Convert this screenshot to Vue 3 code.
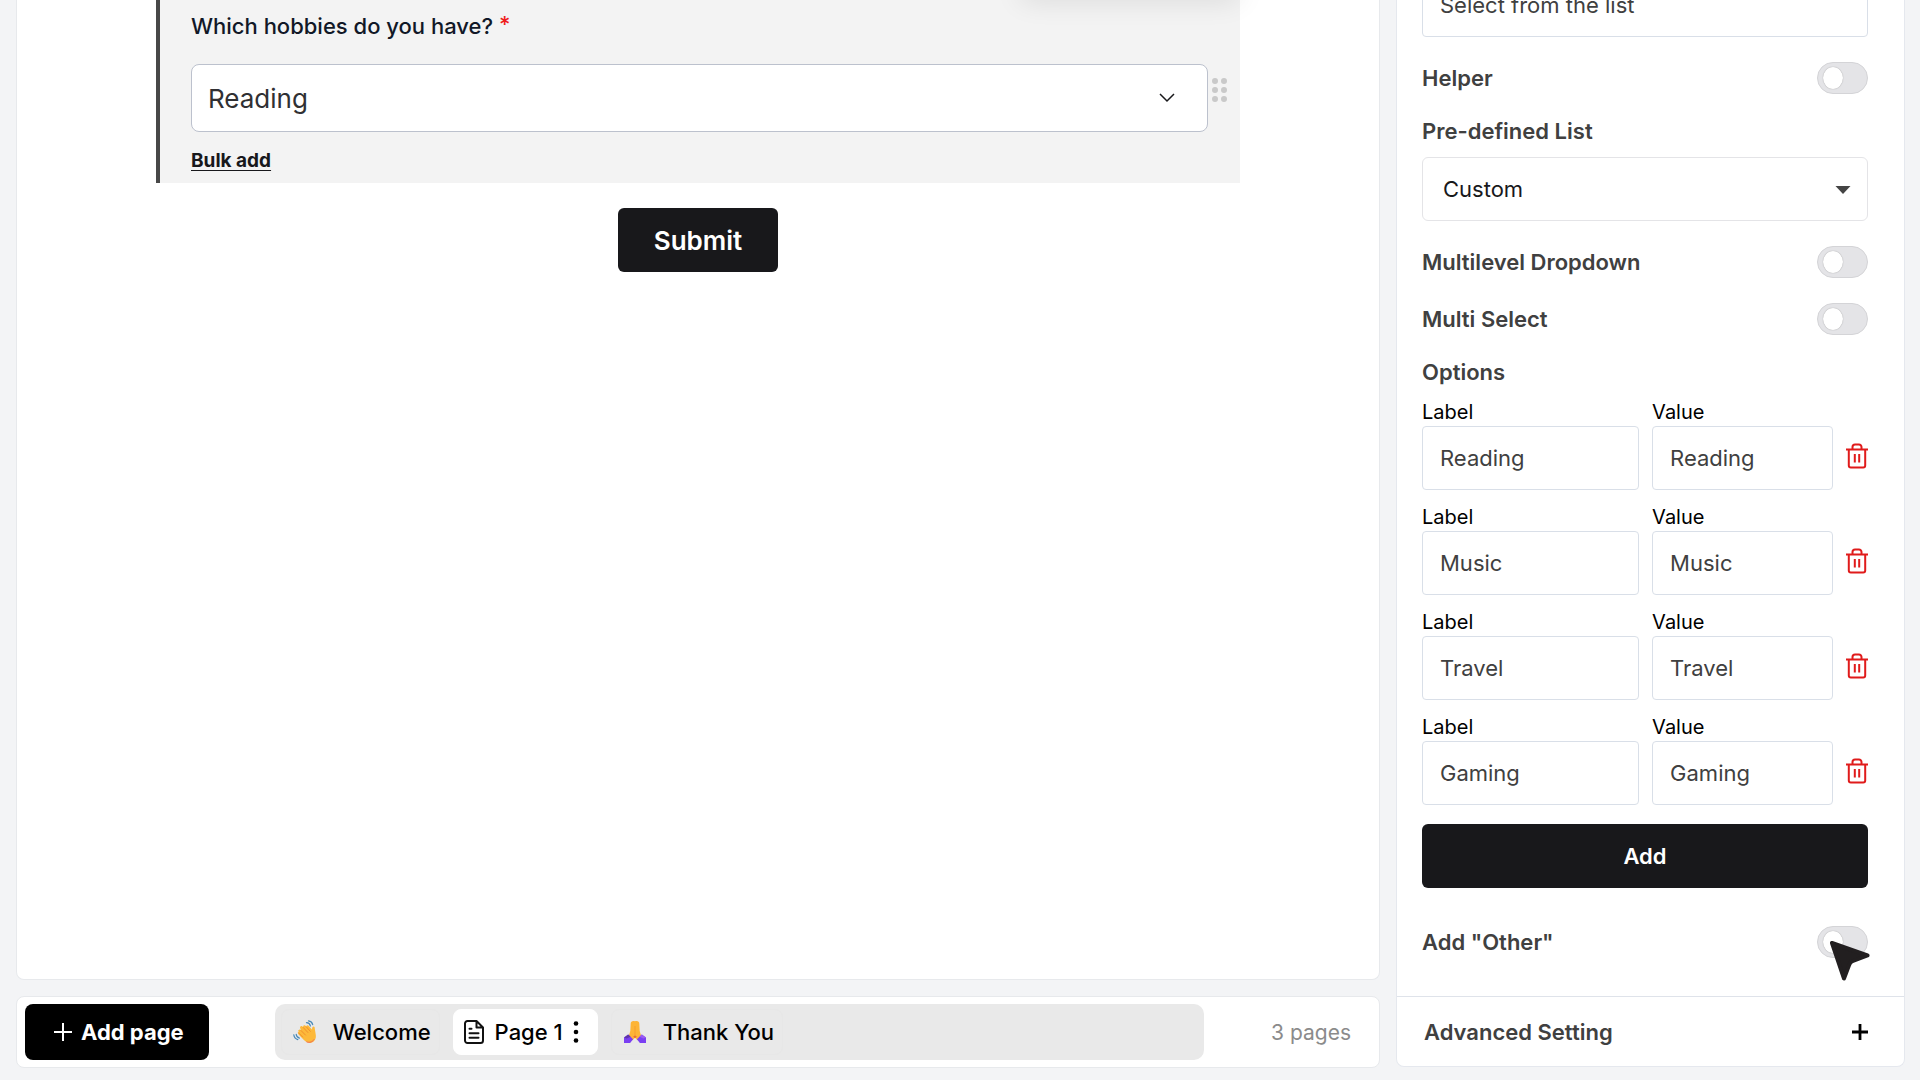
<script setup>
import { ref } from "vue"

const hobby = ref("Reading")
const placeholder = ref("Select from the list")
const listType = ref("Custom")
const helper = ref(false)
const multilevel = ref(false)
const multiSelect = ref(false)
const addOther = ref(false)
const currentPage = ref("page1")

let nextId = 5
const options = ref([
    { id: 1, label: "Reading", value: "Reading" },
    { id: 2, label: "Music", value: "Music" },
    { id: 3, label: "Travel", value: "Travel" },
    { id: 4, label: "Gaming", value: "Gaming" },
])

const addOption = () => {
    options.value.push({ id: nextId++, label: "", value: "" })
}

const removeOption = (id) => {
    options.value = options.value.filter((o) => o.id !== id)
}
</script>

<template>
    <div class="builder">
        <div class="workspace">
            <main class="canvas">
                <section class="question">
                    <div class="toolbar-shadow"></div>
                    <label class="question-title" for="hobby">
                        Which hobbies do you have?
                        <span class="required">*</span>
                    </label>
                    <div class="answer">
                        <select id="hobby" v-model="hobby">
                            <option v-for="o in options" :key="o.id">
                                {{ o.label }}
                            </option>
                        </select>
                        <svg
                            class="chevron"
                            width="16"
                            height="10"
                            viewBox="0 0 16 10"
                        >
                            <path
                                d="M1 1l7 7 7-7"
                                fill="none"
                                stroke="#18181b"
                                stroke-width="1.5"
                            />
                        </svg>
                        <svg
                            class="drag"
                            width="16"
                            height="24"
                            viewBox="0 0 16 24"
                            fill="#c9c9c9"
                        >
                            <circle cx="3" cy="3" r="3" />
                            <circle cx="12" cy="3" r="3" />
                            <circle cx="3" cy="12" r="3" />
                            <circle cx="12" cy="12" r="3" />
                            <circle cx="3" cy="21" r="3" />
                            <circle cx="12" cy="21" r="3" />
                        </svg>
                    </div>
                    <a class="bulk" href="#">Bulk add</a>
                </section>
                <button class="btn submit" type="button">Submit</button>
            </main>

            <footer class="pages">
                <button class="add-page" type="button">
                    <svg width="18" height="18" viewBox="0 0 18 18">
                        <path d="M9 0v18M0 9h18" stroke="#fff" stroke-width="2" />
                    </svg>
                    Add page
                </button>
                <nav class="tabs">
                    <button
                        class="tab"
                        :class="{ active: currentPage === 'welcome' }"
                        type="button"
                        @click="currentPage = 'welcome'"
                    >
                        <svg width="24" height="24" viewBox="0 0 24 24">
                            <path
                                d="M5.5 10.2c1-1 2-.6 2.6 0l-1-2.3c-.3-1.6 1.6-2.4 2.6-1.2l.4.4c-.2-1.7 1.6-2.4 2.7-1.2l.5.5c.3-1.2 1.8-1.4 2.6-.4l3.2 3.8c-.2-1.5.3-3.1 1.5-3.2 1.1 0 1.2 1 1.2 2.2l1 6.2c.5 3.7-1.3 6.8-4.6 7.7-3 .8-5.4-.6-7.3-2.6l-5.3-5.7c-1-1.2-.8-2.6.3-2.9-.9-.5-.9-1.2-.4-1.3z"
                                fill="#fdb93a"
                            />
                            <path
                                d="M8 10.5l4.5 4.6M10.2 7.500l4.7 5M13.3 6.8l4 4.5M5.7 13l4 4"
                                fill="none"
                                stroke="#ef8a2b"
                                stroke-width=".9"
                                stroke-linecap="round"
                            />
                            <path
                                d="M13.5 21.8c2.4 1.2 6 .3 7.6-2.4"
                                fill="none"
                                stroke="#f0695a"
                                stroke-width="1"
                            />
                            <path
                                d="M13.5 2.7c2 .1 3.5 1.4 3.9 3.3M15.5.8c2.2.3 3.7 1.7 4.2 3.8M3.2 14.3c.1 2 1.2 3.3 3.2 3.8M.8 14.8c.3 2.5 1.7 4.2 4 4.8"
                                fill="none"
                                stroke="#4688b8"
                                stroke-width="1.2"
                                stroke-linecap="round"
                            />
                        </svg>
                        Welcome
                    </button>
                    <div
                        class="tab page-tab"
                        :class="{ active: currentPage === 'page1' }"
                    >
                        <button
                            class="page-name"
                            type="button"
                            @click="currentPage = 'page1'"
                        >
                            <svg
                                width="20"
                                height="24"
                                viewBox="0 0 20 24"
                                fill="none"
                                stroke="#111"
                                stroke-width="2"
                                stroke-linejoin="round"
                                stroke-linecap="round"
                            >
                                <path
                                    d="M12.5 1H3.500A2.5 2.5 0 0 0 1 3.500v17A2.500 2.500 0 0 0 3.500 23h13a2.500 2.500 0 0 0 2.500-2.500V7.500zM12.500 1v6.500H19M5.500 8.800h2M5.500 13.300h9M5.500 17.800h9"
                                />
                            </svg>
                            Page 1
                        </button>
                        <button
                            class="more"
                            type="button"
                            aria-label="Page menu"
                        >
                            <svg width="6" height="22" viewBox="0 0 6 22">
                                <circle cx="3" cy="2.5" r="2.3" />
                                <circle cx="3" cy="11" r="2.3" />
                                <circle cx="3" cy="19.5" r="2.3" />
                            </svg>
                        </button>
                    </div>
                    <button
                        class="tab"
                        :class="{ active: currentPage === 'thanks' }"
                        type="button"
                        @click="currentPage = 'thanks'"
                    >
                        <svg width="24" height="24" viewBox="0 0 24 24">
                            <path
                                d="M12 1.2c-2.6-.8-4.3.3-4.3 2.3L7.3 11 5.5 17l4.3 3.2 2.2-3 2.2 3 4.3-3.2-1.8-6-.4-7.5c0-2-1.7-3.1-4.3-2.3z"
                                fill="#fdb436"
                            />
                            <path
                                d="M12 6v11"
                                stroke="#f29a2e"
                                stroke-width=".8"
                            />
                            <path
                                d="M10.2 16.5l1.8-1 1.8 1-1.8 2z"
                                fill="#ec6b35"
                            />
                            <path
                                d="M5.2 14.5l4.9 4.8-3 3.7H1v-5.5z"
                                fill="#7a3ff2"
                            />
                            <path
                                d="M18.8 14.5l-4.9 4.8 3 3.7H23v-5.5z"
                                fill="#7a3ff2"
                            />
                            <path
                                d="M5.2 14.5l2.4 2.3-4 1.7L1 17.5z"
                                fill="#5f35a8"
                            />
                            <path
                                d="M18.8 14.5l-2.4 2.3 4 1.7L23 17.5z"
                                fill="#9a5cf0"
                            />
                        </svg>
                        Thank You
                    </button>
                </nav>
                <span class="count">3 pages</span>
            </footer>
        </div>

        <aside class="settings">
            <div class="fields">
                <input
                    v-model="placeholder"
                    class="input"
                    type="text"
                    aria-label="Placeholder"
                />

                <label class="row">
                    Helper
                    <input v-model="helper" class="toggle" type="checkbox" />
                </label>

                <label class="heading" for="list-type">Pre-defined List</label>
                <div class="list-type">
                    <select id="list-type" v-model="listType">
                        <option>Custom</option>
                    </select>
                    <svg
                        class="caret"
                        width="16"
                        height="8"
                        viewBox="0 0 16 8"
                    >
                        <path d="M.5 0h15L8 8z" fill="#444" />
                    </svg>
                </div>

                <label class="row">
                    Multilevel Dropdown
                    <input
                        v-model="multilevel"
                        class="toggle"
                        type="checkbox"
                    />
                </label>
                <label class="row">
                    Multi Select
                    <input
                        v-model="multiSelect"
                        class="toggle"
                        type="checkbox"
                    />
                </label>

                <h3 class="heading">Options</h3>
                <div class="options">
                    <div v-for="o in options" :key="o.id" class="option">
                        <label class="option-label">
                            Label
                            <input v-model="o.label" class="input" type="text" />
                        </label>
                        <label class="option-value">
                            Value
                            <input v-model="o.value" class="input" type="text" />
                        </label>
                        <button
                            class="remove"
                            type="button"
                            aria-label="Remove option"
                            @click="removeOption(o.id)"
                        >
                            <svg
                                width="22"
                                height="26"
                                viewBox="0 0 22 26"
                                fill="none"
                                stroke="#e01b1b"
                                stroke-width="2"
                                stroke-linejoin="round"
                            >
                                <path
                                    d="M0 6.5h22M2.8 6.5v16a2 2 0 0 0 2 2h12.4a2 2 0 0 0 2-2v-16M6.5 6V4a2.5 2.5 0 0 1 2.5-2.5h4A2.5 2.5 0 0 1 15.5 4v2M8.8 11v8.5M13.2 11v8.5"
                                />
                            </svg>
                        </button>
                    </div>
                </div>

                <button class="btn add" type="button" @click="addOption">
                    Add
                </button>

                <label class="row other">
                    Add "Other"
                    <input v-model="addOther" class="toggle" type="checkbox" />
                    <svg
                        class="pointer"
                        width="40"
                        height="40"
                        viewBox="0 0 40 40"
                    >
                        <path
                            d="M2 2l35.5 12.5L23 20q-3 1.2-3.8 3.8L14 37.5z"
                            fill="#221f20"
                            stroke="#221f20"
                            stroke-width="4"
                            stroke-linejoin="round"
                        />
                    </svg>
                </label>
            </div>
            <button class="advanced" type="button">
                Advanced Setting
                <svg width="16" height="16" viewBox="0 0 16 16">
                    <path d="M8 0v16M0 8h16" stroke="#000" stroke-width="2.8" />
                </svg>
            </button>
        </aside>
    </div>
</template>

<style>
body {
    margin: 0;
    background-color: #f3f4f6;
}
</style>

<style scoped>
.builder {
    display: flex;
    gap: 16px;
    height: 100vh;
    padding: 0 15px 12px 16px;
    box-sizing: border-box;
    overflow: hidden;
    font-family: Inter, "Liberation Sans", sans-serif;
    background-color: #f3f4f6;
    color: #000;
}

button,
input,
select {
    box-sizing: border-box;
    margin: 0;
    font-family: inherit;
}

button {
    padding: 0;
    border: none;
    background: none;
    cursor: pointer;
}

svg {
    display: block;
    flex: none;
}

.workspace {
    flex: 1;
    display: flex;
    flex-direction: column;
    gap: 16px;
    min-width: 0;
}

.canvas {
    flex: 1;
    padding: 0 139px;
    border: 1px solid #e7e9ec;
    border-top: none;
    border-radius: 0 0 8px 8px;
    background-color: #fff;
}

.question {
    position: relative;
    padding: 10px 32px 8px 31px;
    border-left: 4px solid #484848;
    background-color: #f3f3f3;
}

.toolbar-shadow {
    position: absolute;
    top: -20px;
    right: 0;
    width: 220px;
    height: 20px;
    border-radius: 8px;
    box-shadow: 0 0 28px rgba(0, 0, 0, 0.12);
}

.question-title {
    display: block;
    font-size: 22px;
    line-height: 32px;
    font-weight: 500;
    color: #111827;
}

.required {
    vertical-align: 2px;
    line-height: 1;
    color: #ef1c1c;
}

.answer {
    position: relative;
    margin: 22px 0 15px;
}

.answer select {
    display: block;
    width: 100%;
    height: 68px;
    padding: 0 64px 0 16px;
    border: 1px solid #bcc1cd;
    border-radius: 8px;
    appearance: none;
    background-color: #fff;
    font-size: 26px;
    color: #303033;
}

.chevron {
    position: absolute;
    right: 33px;
    top: 29px;
    pointer-events: none;
}

.drag {
    position: absolute;
    right: -20px;
    top: 14px;
}

.bulk {
    display: inline-block;
    font-size: 19px;
    line-height: 28px;
    font-weight: 700;
    color: #18181b;
    text-underline-offset: 3px;
}

.btn {
    display: block;
    height: 64px;
    border-radius: 6px;
    background-color: #18181b;
    font-weight: 600;
    color: #fff;
}

.submit {
    margin: 25px auto 0;
    padding: 0 36px;
    font-size: 26px;
}

.pages {
    display: flex;
    align-items: center;
    padding: 7px 28px 7px 8px;
    border: 1px solid #e7e9ec;
    border-radius: 8px;
    background-color: #fff;
}

.add-page {
    display: flex;
    align-items: center;
    gap: 9px;
    height: 56px;
    padding: 0 25px 0 29px;
    border-radius: 8px;
    background-color: #000;
    font-size: 22px;
    font-weight: 700;
    color: #fff;
    white-space: nowrap;
}

.tabs {
    flex: 1;
    display: flex;
    align-items: center;
    gap: 13px;
    height: 56px;
    margin: 0 67px 0 66px;
    padding: 0 6px;
    box-sizing: border-box;
    border-radius: 10px;
    background-color: #e9e9e9;
}

.tab {
    display: flex;
    align-items: center;
    gap: 16px;
    height: 46px;
    padding: 0 8px 0 11px;
    box-sizing: border-box;
    border: 1px solid #e7e7e7;
    border-radius: 8px;
    font-size: 22px;
    font-weight: 500;
    color: #000;
    white-space: nowrap;
}

.tab.active {
    border-color: #fff;
    background-color: #fff;
}

.page-tab {
    gap: 10px;
    padding: 0 18px 0 10px;
}

.page-name {
    display: flex;
    align-items: center;
    gap: 11px;
    font-size: 22px;
    font-weight: 500;
    color: #000;
}

.count {
    font-size: 21px;
    color: #8b8b8b;
    white-space: nowrap;
}

.settings {
    display: flex;
    flex-direction: column;
    width: 509px;
    margin-bottom: 1px;
    box-sizing: border-box;
    border: 1px solid #e5e8ee;
    border-top: none;
    border-radius: 0 0 8px 8px;
    background-color: #fff;
}

.fields {
    flex: 1;
    display: flex;
    flex-direction: column;
    justify-content: flex-end;
    min-height: 0;
    padding: 0 36px 38px 25px;
    overflow: hidden;
    font-size: 22px;
    color: #404040;
}

.fields > * {
    flex: none;
}

.input {
    display: block;
    width: 100%;
    height: 64px;
    padding: 0 17px;
    border: 1px solid #d9dfe8;
    border-radius: 4px;
    background-color: #fff;
    font-size: 22px;
    color: #404040;
}

.row {
    position: relative;
    display: flex;
    align-items: center;
    justify-content: space-between;
    height: 32px;
    margin-top: 25px;
    font-weight: 600;
}

.toggle {
    width: 51px;
    height: 32px;
    padding: 4px 5px;
    border: 1px solid #d4d4d7;
    border-radius: 16px;
    appearance: none;
    background-color: #e4e4e7;
    cursor: pointer;
}

.toggle::before {
    content: "";
    display: block;
    width: 20px;
    height: 22px;
    border-radius: 50%;
    background-color: #fff;
    box-shadow: 0 0 1px rgba(0, 0, 0, 0.4);
}

.toggle:checked {
    background-color: #18181b;
}

.toggle:checked::before {
    margin-left: 19px;
}

.heading {
    margin: 23px 0 0;
    font-size: 22px;
    line-height: 28px;
    font-weight: 600;
}

.list-type {
    position: relative;
    margin-top: 12px;
}

.list-type select {
    display: block;
    width: 100%;
    height: 64px;
    padding: 0 48px 0 20px;
    border: 1px solid #e4e4e7;
    border-radius: 6px;
    appearance: none;
    background-color: #fff;
    font-size: 22px;
    color: #18181b;
}

.caret {
    position: absolute;
    right: 17px;
    top: 29px;
    pointer-events: none;
}

.options {
    display: flex;
    flex-direction: column;
    gap: 15px;
    margin-top: 14px;
}

.option {
    display: flex;
    align-items: flex-end;
    gap: 13px;
    font-size: 20px;
    line-height: 24px;
    color: #000;
}

.option .input {
    margin-top: 2px;
}

.option-label {
    flex: 6;
    min-width: 0;
}

.option-value {
    flex: 5;
    min-width: 0;
}

.remove {
    margin-bottom: 21px;
}

.add {
    margin-top: 19px;
    font-size: 22px;
}

.other {
    margin-top: 38px;
}

.pointer {
    position: absolute;
    right: -2px;
    top: 15px;
    pointer-events: none;
}

.advanced {
    display: flex;
    align-items: center;
    justify-content: space-between;
    height: 70px;
    padding: 0 36px 0 27px;
    border-top: 1px solid #dfe3ea;
    font-size: 22px;
    font-weight: 600;
    color: #404040;
}
</style>
